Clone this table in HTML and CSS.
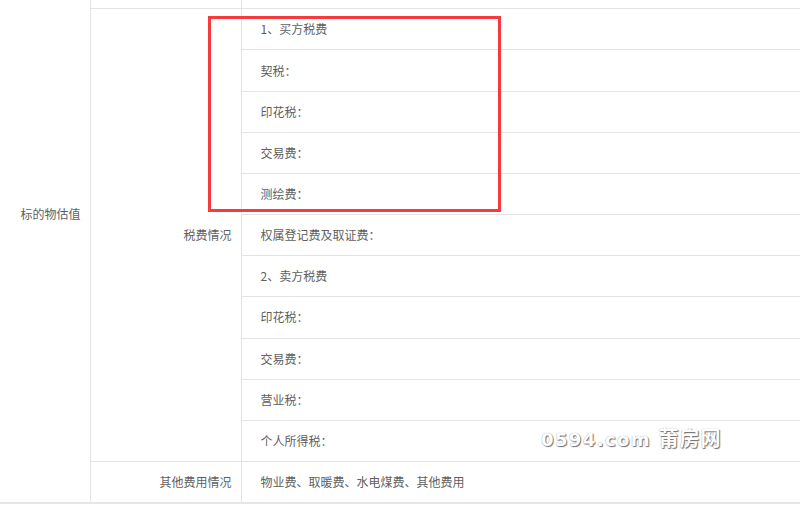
FILE: index.html
```html
<!DOCTYPE html>
<html lang="zh-CN">
<head>
<meta charset="utf-8">
<title>税费情况</title>
<link rel="stylesheet" href="styles.css">
</head>
<body>
<div class="page">
  <table class="info">
    <colgroup>
      <col class="c1">
      <col class="c2">
      <col class="c3">
    </colgroup>
    <tr>
      <td class="label l1" rowspan="14">标的物估值</td>
      <td class="label"></td>
      <td class="val"></td>
    </tr>
    <tr>
      <td class="label"></td>
      <td class="val"></td>
    </tr>
    <tr>
      <td class="label" rowspan="11">税费情况</td>
      <td class="val">1、买方税费</td>
    </tr>
    <tr><td class="val">契税：</td></tr>
    <tr><td class="val">印花税：</td></tr>
    <tr><td class="val">交易费：</td></tr>
    <tr><td class="val">测绘费：</td></tr>
    <tr><td class="val">权属登记费及取证费：</td></tr>
    <tr><td class="val">2、卖方税费</td></tr>
    <tr><td class="val">印花税：</td></tr>
    <tr><td class="val">交易费：</td></tr>
    <tr><td class="val">营业税：</td></tr>
    <tr><td class="val">个人所得税：</td></tr>
    <tr>
      <td class="label">其他费用情况</td>
      <td class="val">物业费、取暖费、水电煤费、其他费用</td>
    </tr>
  </table>
  <div class="highlight"></div>
  <div class="watermark">0594.com <span class="wm-cn">莆房网</span></div>
</div>
</body>
</html>
```

FILE: styles.css
```css
html, body {
  margin: 0;
  padding: 0;
  background: #fff;
}

.page {
  position: relative;
  width: 800px;
  height: 507px;
  overflow: hidden;
}

.info {
  border-collapse: collapse;
  width: 820px;
  margin-top: -74px;
  font-family: "Noto Sans CJK SC", "Noto Sans", sans-serif;
  font-size: 12px;
  color: #5f5f5f;
  border-bottom: 2px solid #e6e6e6;
}

.c1 { width: 90px; }
.c2 { width: 151px; }

.info tr {
  height: 41.17px;
}

.info td {
  border: 1px solid #e3e3e3;
  padding: 0;
  line-height: 16px;
  vertical-align: middle;
}

.info td.l1 {
  border-left: none;
}

.label {
  text-align: right;
  padding-right: 9px !important;
}

.val {
  padding-left: 19px !important;
  border-right: none !important;
}

.highlight {
  position: absolute;
  left: 208px;
  top: 16px;
  width: 287px;
  height: 190px;
  border: 3px solid #f63b3f;
}

.watermark {
  position: absolute;
  left: 541px;
  top: 427px;
  font-family: "DejaVu Sans", "Noto Sans CJK SC", sans-serif;
  font-size: 18px;
  line-height: 24px;
  font-weight: bold;
  letter-spacing: 1.4px;
  color: #fff;
  text-shadow: 1px 1px 1px #6f6f6f, 0 0 1px #8a8a8a;
  white-space: nowrap;
}

.wm-cn {
  font-size: 20px;
  letter-spacing: 1px;
}
```
